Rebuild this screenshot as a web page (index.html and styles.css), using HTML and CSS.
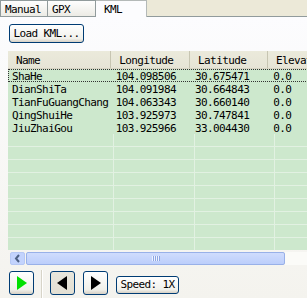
FILE: index.html
```html
<!DOCTYPE html>
<html lang="en">
<head>
    <meta charset="UTF-8">
    <title>Route Player</title>
    <link rel="stylesheet" href="styles.css">
</head>
<body>
    <div class="window">
        <div class="tabs">
            <div class="tab">Manual</div>
            <div class="tab">GPX</div>
            <div class="tab active">KML</div>
        </div>
        <div class="panel">
            <button class="btn load-button">Load KML...</button>
            <div class="list">
                <div class="list-header">
                    <div class="col col-name">Name</div>
                    <div class="col col-lon">Longitude</div>
                    <div class="col col-lat">Latitude</div>
                    <div class="col col-ele">Elevation</div>
                </div>
                <div class="list-body">
                    <div class="row focused">
                        <div class="col col-name">ShaHe</div>
                        <div class="col col-lon">104.098506</div>
                        <div class="col col-lat">30.675471</div>
                        <div class="col col-ele">0.0</div>
                    </div>
                    <div class="row">
                        <div class="col col-name">DianShiTa</div>
                        <div class="col col-lon">104.091984</div>
                        <div class="col col-lat">30.664843</div>
                        <div class="col col-ele">0.0</div>
                    </div>
                    <div class="row">
                        <div class="col col-name">TianFuGuangChang</div>
                        <div class="col col-lon">104.063343</div>
                        <div class="col col-lat">30.660140</div>
                        <div class="col col-ele">0.0</div>
                    </div>
                    <div class="row">
                        <div class="col col-name">QingShuiHe</div>
                        <div class="col col-lon">103.925973</div>
                        <div class="col col-lat">30.747841</div>
                        <div class="col col-ele">0.0</div>
                    </div>
                    <div class="row">
                        <div class="col col-name">JiuZhaiGou</div>
                        <div class="col col-lon">103.925966</div>
                        <div class="col col-lat">33.004430</div>
                        <div class="col col-ele">0.0</div>
                    </div>
                </div>
            </div>
            <div class="scrollbar">
                <div class="scroll-arrow">
                    <svg width="7" height="9" viewBox="0 0 7 9"><path d="M5 1 L2 4.5 L5 8" fill="none" stroke="#4d6185" stroke-width="2"/></svg>
                </div>
                <div class="scroll-thumb"><span class="grip"></span></div>
                <div class="scroll-track"></div>
            </div>
            <div class="controls">
                <button class="btn ctrl-button play">
                    <svg width="12" height="14" viewBox="0 0 12 14"><path d="M1 0 L11 7 L1 14 Z" fill="#00e000"/></svg>
                </button>
                <div class="separator"></div>
                <button class="btn ctrl-button pressed">
                    <svg width="11" height="14" viewBox="0 0 11 14"><path d="M10 0 L0 7 L10 14 Z" fill="#000"/></svg>
                </button>
                <button class="btn ctrl-button">
                    <svg width="11" height="14" viewBox="0 0 11 14"><path d="M1 0 L11 7 L1 14 Z" fill="#000"/></svg>
                </button>
                <button class="btn speed-button">Speed: 1X</button>
            </div>
        </div>
    </div>
</body>
</html>
```

FILE: styles.css
```css
body {
    margin: 0;
    padding: 0;
    font-family: "DejaVu Sans Mono", "Liberation Mono", monospace;
    font-size: 11px;
    letter-spacing: -0.6px;
    color: #000;
}

.window {
    width: 307px;
    height: 298px;
    overflow: hidden;
    background-color: #ece9d8;
}

.tabs {
    display: flex;
    height: 16px;
    border-bottom: 1px solid #919b9c;
}

.tab {
    box-sizing: border-box;
    height: 16px;
    padding: 2px 0 0 4px;
    border: 1px solid #919b9c;
    border-bottom: none;
    border-left: none;
    background: linear-gradient(#fefefe, #ecebe5);
}

.tab:nth-child(1) {
    width: 48px;
    border-left: 1px solid #919b9c;
}

.tab:nth-child(2) {
    width: 48px;
}

.tab.active {
    width: 51px;
    height: 17px;
    padding-left: 8px;
    background: #fcfcfe;
    border-color: #b4b9b8;
    position: relative;
    z-index: 1;
}

.panel {
    height: 281px;
    background: linear-gradient(#fcfcfe, #f4f3ee);
    display: flex;
    flex-direction: column;
}

.btn {
    font-family: inherit;
    font-size: 11px;
    letter-spacing: -0.6px;
    color: #000;
    border: 1px solid #003c74;
    border-radius: 3px;
    background: linear-gradient(#ffffff, #f0f0ea 80%, #d6d0c5);
    padding: 0;
    cursor: pointer;
}

.load-button {
    align-self: flex-start;
    width: 75px;
    height: 19px;
    margin: 7px 0 0 9px;
}

.list {
    margin: 8px 0 0 8px;
    width: 320px;
    height: 200px;
    display: flex;
    flex-direction: column;
}

.list-header {
    display: flex;
    height: 18px;
    background: linear-gradient(#ebeadb, #e6e4d6);
    border-bottom: 1px solid #d6d2c2;
    box-sizing: border-box;
}

.list-header .col {
    box-sizing: border-box;
    padding: 3px 0 0 8px;
    border-right: 1px solid #c7c5b2;
    white-space: nowrap;
}

.list-body {
    flex: 1;
    background-color: #cde8cd;
    background-image:
        linear-gradient(90deg, transparent 105px, #e2f1e2 105px, #e2f1e2 106px, transparent 106px,
            transparent 186px, #e2f1e2 186px, #e2f1e2 187px, transparent 187px,
            transparent 266px, #e2f1e2 266px, #e2f1e2 267px, transparent 267px),
        repeating-linear-gradient(transparent 0, transparent 12px, #e2f1e2 12px, #e2f1e2 13px);
}

.row {
    display: flex;
    height: 13px;
    background-color: #cde8cd;
}

.row .col {
    box-sizing: border-box;
    padding: 1px 0 0 4px;
    line-height: 13px;
    border-right: 1px solid #cde8cd;
}

.row.focused {
    outline: 1px dotted #333;
    outline-offset: -1px;
}

.col-name {
    width: 106px;
}

.col-lon {
    width: 81px;
}

.col-lat {
    width: 80px;
}

.col-ele {
    width: 60px;
}

.scrollbar {
    display: flex;
    height: 13px;
    margin: 2px 0 0 10px;
}

.scroll-arrow {
    width: 15px;
    box-sizing: border-box;
    border: 1px solid #b6c8f4;
    border-radius: 2px;
    background: #c3d3fd;
    display: flex;
    align-items: center;
    justify-content: center;
}

.scroll-thumb {
    width: 259px;
    margin-left: 1px;
    box-sizing: border-box;
    border: 1px solid #98b0e8;
    border-radius: 2px;
    background: linear-gradient(#cfdcfd, #bccefb);
    display: flex;
    align-items: center;
    justify-content: center;
}

.grip {
    width: 8px;
    height: 5px;
    background: repeating-linear-gradient(90deg, #eef3fe 0, #eef3fe 1px, #8ca5e4 1px, #8ca5e4 2px);
}

.scroll-track {
    flex: 1;
    background: #fbfbf8;
}

.controls {
    display: flex;
    align-items: center;
    height: 30px;
    margin-top: 3px;
    padding-left: 9px;
}

.ctrl-button {
    width: 25px;
    height: 24px;
    display: flex;
    align-items: center;
    justify-content: center;
    margin-right: 8px;
}

.play {
    margin-right: 0;
}

.ctrl-button.pressed {
    background: linear-gradient(#e8e6dc, #e2dfd3);
}

.separator {
    width: 1px;
    height: 30px;
    margin: 4px 7px 0 7px;
    background: #d7d4c8;
    border-right: 1px solid #ffffff;
}

.speed-button {
    width: 63px;
    height: 18px;
    margin-top: 4px;
}
```
